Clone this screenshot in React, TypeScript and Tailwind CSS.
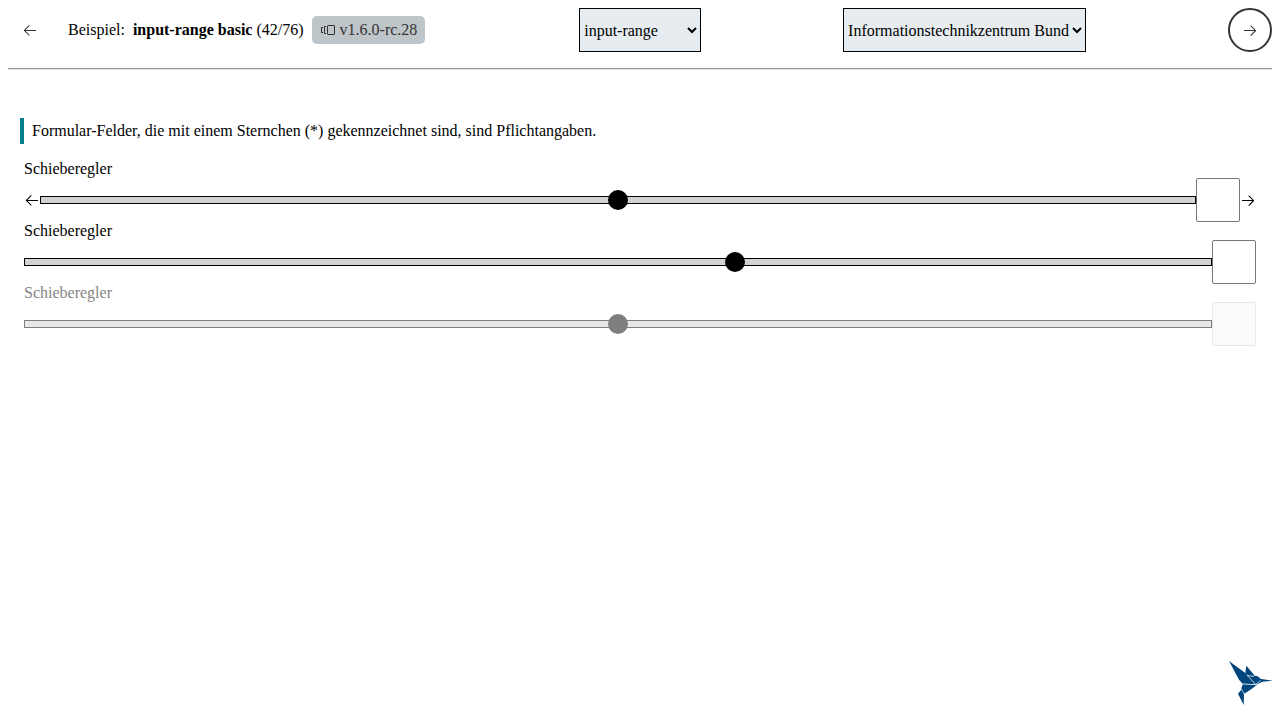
import { useState } from "react";
import { VscArrowLeft, VscArrowRight, VscVersions } from "react-icons/vsc";

type RangeFieldProps = {
  id: string;
  initial: number;
  disabled?: boolean;
  icons?: boolean;
};

function RangeField({ id, initial, disabled = false, icons = false }: RangeFieldProps) {
  const [value, setValue] = useState(initial);
  return (
    <div className={disabled ? "opacity-50" : ""}>
      <label htmlFor={id} className="block h-[18px] leading-[18px]">
        Schieberegler
      </label>
      <div className="flex h-11 items-center">
        {icons && <VscArrowLeft aria-hidden="true" className="size-4 shrink-0" />}
        <input
          id={id}
          type="range"
          min={0}
          max={100}
          value={value}
          disabled={disabled}
          onChange={(event) => setValue(Number(event.target.value))}
          className="h-5 min-w-0 flex-1 appearance-none bg-transparent [&::-webkit-slider-runnable-track]:h-2 [&::-webkit-slider-runnable-track]:border [&::-webkit-slider-runnable-track]:border-black [&::-webkit-slider-runnable-track]:bg-[#d3d3d3] [&::-webkit-slider-thumb]:-mt-[7px] [&::-webkit-slider-thumb]:size-5 [&::-webkit-slider-thumb]:appearance-none [&::-webkit-slider-thumb]:rounded-full [&::-webkit-slider-thumb]:bg-black"
        />
        <input
          type="number"
          aria-label="Schieberegler"
          disabled={disabled}
          className={
            disabled
              ? "size-11 shrink-0 rounded-xs border border-[#d0d0d0] bg-[#f8f8f8]"
              : "size-11 shrink-0 rounded-xs border border-[#767676] bg-white"
          }
        />
        {icons && <VscArrowRight aria-hidden="true" className="size-4 shrink-0" />}
      </div>
    </div>
  );
}

function Hummingbird() {
  return (
    <svg viewBox="9 8 132 132" className="size-11" fill="#00457c" aria-hidden="true">
      <path d="M9 8 L63 48 L88 78 L50 76 L39 64 Z" />
      <path d="M61 22 L87 53 L66 52 L58 43 Z" />
      <path d="M65 52 L83 54 Q93 48 102 60 L104 64 L89 78 Z" />
      <path d="M51 77 L93 79 Q80 90 54 107 L46 90 Z" />
      <path d="M50 79 L54 106 L53 140 L36 106 L46 94 Z" />
      <path d="M101 61 L141 67 L109 70 L89 80 Z" />
      <g stroke="#fff" strokeWidth="2" fill="none">
        <path d="M51 77 L89 79" />
        <path d="M62 49 L89 79 L104 66" />
        <path d="M64 52 L84 54" />
        <path d="M46 91 L54 107 L58 104" />
      </g>
    </svg>
  );
}

export default function App() {
  return (
    <div className="p-2 font-['Liberation_Serif',serif] text-base text-black">
      <header className="flex items-center justify-between">
        <div className="flex items-center pr-3">
          <button
            type="button"
            aria-label="Vorheriges Beispiel"
            className="flex size-11 items-center justify-center rounded-full text-[#333]"
          >
            <VscArrowLeft className="size-4" />
          </button>
          <p className="ml-4 whitespace-nowrap">
            Beispiel:&nbsp; <strong>input-range basic</strong> (42/76)
          </p>
          <span className="ml-2 flex h-7 items-center gap-1 rounded-[5px] bg-[#bec5c9] px-2 whitespace-nowrap text-[#333]">
            <VscVersions aria-hidden="true" className="size-4" />
            v1.6.0-rc.28
          </span>
        </div>
        <select
          aria-label="Beispiel"
          className="h-11 w-[122px] border border-black bg-[#e7ecf0]"
        >
          <option>input-range</option>
        </select>
        <select
          aria-label="Theme"
          className="h-11 w-[243px] border border-black bg-[#e7ecf0]"
        >
          <option>Informationstechnikzentrum Bund</option>
        </select>
        <button
          type="button"
          aria-label="Nächstes Beispiel"
          className="flex size-11 items-center justify-center rounded-full border-2 border-[#333] text-[#333]"
        >
          <VscArrowRight className="size-4" />
        </button>
      </header>
      <hr className="mt-4 h-0.5 border-t border-b border-t-[#949494] border-b-[#e4e4e4]" />
      <main className="px-4 pt-12">
        <p className="-ml-1 h-[26px] border-l-4 border-[#00818b] pl-2 leading-[26px]">
          Formular-Felder, die mit einem Sternchen (*) gekennzeichnet sind, sind Pflichtangaben.
        </p>
        <form className="mt-4">
          <RangeField id="range-icons" initial={50} icons />
          <RangeField id="range-value" initial={60} />
          <RangeField id="range-disabled" initial={50} disabled />
        </form>
      </main>
      <div className="fixed right-[7px] bottom-[15px]">
        <Hummingbird />
      </div>
    </div>
  );
}
